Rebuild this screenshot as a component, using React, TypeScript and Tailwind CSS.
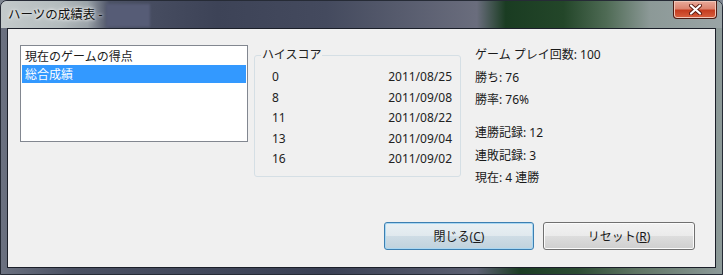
import React from 'react';

const highScores = [
  { score: '0', date: '2011/08/25' },
  { score: '8', date: '2011/09/08' },
  { score: '11', date: '2011/08/22' },
  { score: '13', date: '2011/09/04' },
  { score: '16', date: '2011/09/02' },
];

// Vista style red close button glyph
const CloseGlyph = () => (
  <svg width="13" height="11" viewBox="0 0 13 11">
    <path d="M2 1.5 L11 9.5 M11 1.5 L2 9.5" stroke="#5a1a10" strokeWidth="4" strokeLinecap="round" />
    <path d="M2 1.5 L11 9.5 M11 1.5 L2 9.5" stroke="#ffffff" strokeWidth="2.2" strokeLinecap="round" />
  </svg>
);

const App: React.FC = () => {
  return (
    <div
      className="w-[723px] h-[275px] overflow-hidden bg-[#7d8590] text-[12px] text-[#1a1a1a]"
      style={{ fontFamily: '"Noto Sans", "Noto Sans CJK JP", sans-serif' }}
    >
      <div className="flex h-full flex-col rounded-t-[7px] border border-[#262b36] bg-[linear-gradient(to_right,#6b7180_0%,#4a5062_10%,#3a4054_45%,#5c6072_66%,#1c3d24_72%,#2c4c33_80%,#5e7463_88%,#8d9a99_100%)] shadow-[inset_0_1px_0_#d8dde2]">
        {/* Title bar */}
        <div className="flex h-[27px] shrink-0 items-start justify-between rounded-t-[6px] bg-[linear-gradient(to_right,#c3cacb_0%,#b4bcbe_8%,#9aa2a8_12%,#4c5266_15%,#3d4357_30%,#444a5e_45%,#6a6d7d_66%,#1a3c22_70%,#234629_78%,#4f6b55_84%,#8c9997_90%,#9aa4a6_100%)]">
          <div className="flex h-full items-center pl-[7px]">
            <span className="mt-[1px] text-[12.5px] text-[#111] [text-shadow:0_0_6px_#ffffff,0_0_3px_#ffffff]">ハーツの成績表 -</span>
            <span className="ml-[3px] mt-[1px] h-[23px] w-[44px] bg-[#565c76] blur-[1px]" />
          </div>
          <button className="mr-[5px] flex h-[18px] w-[44px] items-center justify-center rounded-b-[4px] border border-t-0 border-[#4e1c14] bg-[linear-gradient(to_bottom,#e9aa9a_0%,#dc8470_45%,#c53d20_55%,#d8603f_100%)] shadow-[inset_0_0_0_1px_#f2c6b8]">
            <CloseGlyph />
          </button>
        </div>

        {/* Client area */}
        <div className="mx-[6px] mb-[6px] flex flex-1 flex-col border border-[#1b1f29] bg-[#f0f0f0]">
          <div className="flex items-start pl-[12px] pt-[13px]">
            {/* List box */}
            <div className="mt-[3px] h-[97px] w-[228px] border border-[#828790] bg-white px-[1px] pt-[1px]">
              <div className="flex h-[18px] items-center pl-[3px] pt-[2px]">現在のゲームの得点</div>
              <div className="flex h-[18px] items-center bg-[#3399ff] pl-[3px] pt-[2px] text-white">総合成績</div>
            </div>

            {/* High score group */}
            <fieldset className="ml-[6px] mt-[6px] h-[129px] w-[207px] rounded-[3px] border border-[#d5dfe5]">
              <legend className="ml-[6px] px-[1px] leading-[14px] text-[#222]">ハイスコア</legend>
              <div className="pl-[17px] pr-[8px] pt-[5px] text-[#222]">
                {highScores.map((row) => (
                  <div key={row.date} className="flex justify-between leading-[20.5px]">
                    <span>{row.score}</span>
                    <span>{row.date}</span>
                  </div>
                ))}
              </div>
            </fieldset>

            {/* Stats */}
            <div className="ml-[14px] mt-[2px] leading-[22.5px]">
              <div>ゲーム プレイ回数: 100</div>
              <div>勝ち: 76</div>
              <div>勝率: 76%</div>
              <div className="mt-[10.5px]">連勝記録: 12</div>
              <div>連敗記録: 3</div>
              <div>現在: 4 連勝</div>
            </div>
          </div>

          {/* Buttons */}
          <div className="mt-auto flex justify-end gap-[9px] pb-[17px] pr-[20px]">
            <button className="h-[28px] w-[150px] rounded-[3px] border border-[#3c7fb1] bg-[linear-gradient(to_bottom,#e9f0f4_0%,#e0e9ee_50%,#cedce5_51%,#c0d2dd_100%)] pt-[1px] text-[12px] text-[#1a1a1a] shadow-[inset_0_0_0_1px_#a9d7f2]">
              閉じる(<span className="underline">C</span>)
            </button>
            <button className="h-[28px] w-[152px] rounded-[3px] border border-[#707070] bg-[linear-gradient(to_bottom,#f2f2f2_0%,#ebebeb_50%,#dddddd_51%,#cfcfcf_100%)] pt-[1px] text-[12px] text-[#1a1a1a] shadow-[inset_0_0_0_1px_#fbfbfb]">
              リセット(<span className="underline">R</span>)
            </button>
          </div>
        </div>
      </div>
    </div>
  );
};

export default App;
